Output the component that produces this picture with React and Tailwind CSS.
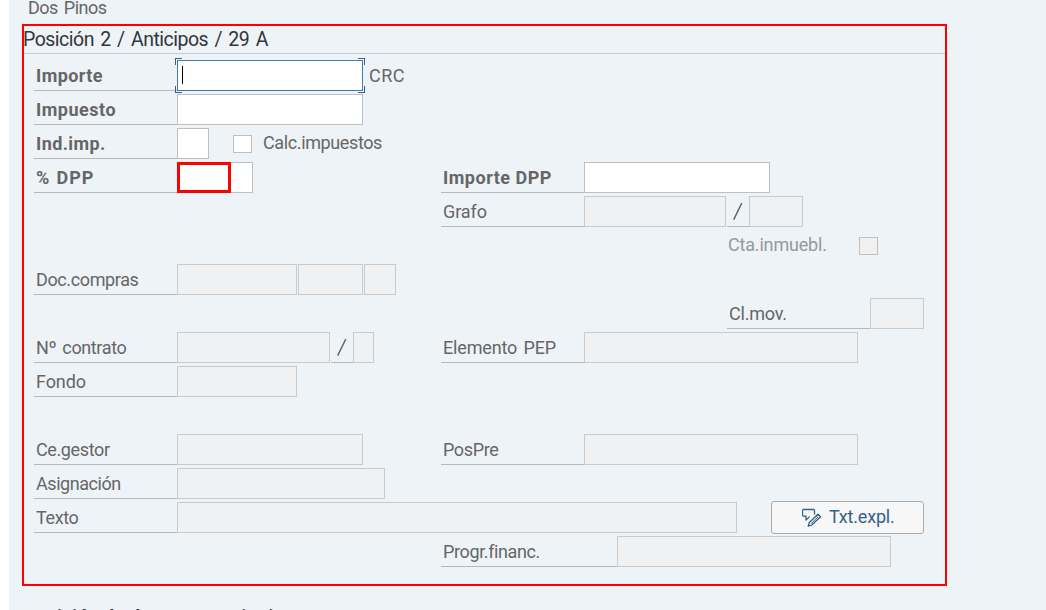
import React from "react";

const Row = ({ children }) => <div className="flex h-[34px] items-start">{children}</div>;

const Label = ({ children, className = "w-[143px]" }) => (
  <div className={`h-[31px] shrink-0 whitespace-nowrap border-b border-[#b5b9bb] pl-[2px] leading-[31px] ${className}`}>
    {children}
  </div>
);

const Slash = ({ className = "" }) => (
  <div className={`ml-px flex h-[31px] w-[22px] shrink-0 items-center justify-center border-b border-[#b5b9bb] ${className}`}>
    <svg width="10" height="18" viewBox="0 0 10 18" fill="none" stroke="#666" strokeWidth="1.5">
      <path d="M.7 17.6 8.8 1" />
    </svg>
  </div>
);

const Input = ({ className = "" }) => (
  <div className={`h-[31px] shrink-0 border border-[#bfbfbf] bg-white ${className}`} />
);

const ReadOnly = ({ className = "" }) => (
  <div className={`h-[31px] shrink-0 border border-[#c9cacb] bg-[#f0f1f3] ${className}`} />
);

const FocusedInput = () => (
  <div className="relative h-[31px] w-[186px] shrink-0 border border-[#427cac] bg-white pl-1 pt-[5px]">
    <div className="h-[18px] w-px bg-black" />
    <span className="absolute -left-[3px] -top-[3px] h-[7px] w-[7px] border-l border-t border-[#346187]" />
    <span className="absolute -right-[3px] -top-[3px] h-[7px] w-[7px] border-r border-t border-[#346187]" />
    <span className="absolute -bottom-[3px] -left-[3px] h-[7px] w-[7px] border-b border-l border-[#346187]" />
    <span className="absolute -bottom-[3px] -right-[3px] h-[7px] w-[7px] border-b border-r border-[#346187]" />
  </div>
);

export default function App() {
  return (
    <div className="h-[610px] w-[1046px] overflow-hidden bg-white pl-[9px] font-['Roboto',sans-serif] text-[18px] tracking-[-0.38px] text-[#666] [word-spacing:2px]">
      <div className="h-full bg-[#eef3f8] pl-[13px]">
        <div className="flex h-6 items-start pl-[6px]">
          <span className="-mt-[2px] whitespace-nowrap leading-[20px] tracking-[-0.5px]">Dos Pinos</span>
        </div>
        <main className="h-[562px] w-[925px] border-2 border-[#fe0000]">
          <h1 className="h-[28px] whitespace-nowrap border-b border-[#c5cdd2] text-[19.5px] leading-[27px] tracking-[-0.5px] text-[#32363a] [word-spacing:2px]">
            <span className="-ml-px">Posición 2 / Anticipos / 29 A</span>
          </h1>
          <div className="pl-[10px] pt-[6px]">
            <Row>
              <Label className="w-[143px] font-bold tracking-[0.4px]">Importe</Label>
              <FocusedInput />
              <span className="ml-[6px] leading-[31px] tracking-[0.5px]">CRC</span>
            </Row>
            <Row>
              <Label className="w-[143px] font-bold tracking-[0.5px]">Impuesto</Label>
              <Input className="w-[186px]" />
            </Row>
            <Row>
              <Label className="w-[143px] font-bold tracking-[0.4px]">Ind.imp.</Label>
              <Input className="w-[32px]" />
              <div className="ml-6 mt-[7px] h-[18px] w-[19px] border border-[#bfbfbf] bg-white" />
              <span className="ml-[11px] leading-[30px]">Calc.impuestos</span>
            </Row>
            <Row>
              <Label className="w-[143px] font-bold tracking-[0.9px] [word-spacing:1px]">% DPP</Label>
              <div className="flex h-[31px] w-[76px] border border-[#bfbfbf] bg-white">
                <div className="-ml-px -mt-px h-[31px] w-[54px] border-[3px] border-[#fe0000]" />
              </div>
              <Label className="ml-[188px] w-[143px] font-bold tracking-[0.5px] [word-spacing:0px]">Importe DPP</Label>
              <Input className="w-[186px]" />
            </Row>
            <Row>
              <Label className="ml-[407px] w-[143px] tracking-[-0.1px]">Grafo</Label>
              <ReadOnly className="w-[142px]" />
              <Slash />
              <ReadOnly className="w-[54px]" />
            </Row>
            <Row>
              <span className="ml-[694px] w-[131px] leading-[30px] tracking-[-0.18px] text-[#95999d]">Cta.inmuebl.</span>
              <div className="mt-[7px] h-[18px] w-[19px] border border-[#bfbfbf] bg-[#f1f1f2]" />
            </Row>
            <Row>
              <Label>Doc.compras</Label>
              <ReadOnly className="w-[120px]" />
              <ReadOnly className="ml-px w-[65px]" />
              <ReadOnly className="ml-px w-[32px]" />
            </Row>
            <Row>
              <Label className="ml-[693px] w-[143px] tracking-[-0.2px]">Cl.mov.</Label>
              <ReadOnly className="w-[54px]" />
            </Row>
            <Row>
              <Label>Nº contrato</Label>
              <ReadOnly className="w-[153px]" />
              <Slash />
              <ReadOnly className="w-[21px]" />
              <Label className="ml-[67px] w-[143px] tracking-[-0.15px]">Elemento PEP</Label>
              <ReadOnly className="w-[274px]" />
            </Row>
            <Row>
              <Label className="w-[143px] tracking-[-0.1px]">Fondo</Label>
              <ReadOnly className="w-[120px]" />
            </Row>
            <Row />
            <Row>
              <Label>Ce.gestor</Label>
              <ReadOnly className="w-[186px]" />
              <Label className="ml-[78px] w-[143px]">PosPre</Label>
              <ReadOnly className="w-[274px]" />
            </Row>
            <Row>
              <Label className="w-[143px] tracking-[-0.45px]">Asignación</Label>
              <ReadOnly className="w-[208px]" />
            </Row>
            <Row>
              <Label>Texto</Label>
              <ReadOnly className="w-[560px]" />
              <button className="-mt-px ml-[34px] flex h-[33px] w-[153px] items-center rounded-[3px] border border-[#ababab] bg-[#f7f7f7] pl-[30px] text-[#346187]">
                <svg width="20" height="20" viewBox="0 0 20 20" fill="none" stroke="currentColor" strokeWidth="1.3" strokeLinejoin="round">
                  <path d="M12.5 6.5V2.2L11.8 1.5H1.2L.5 2.2v5.2l.7.8H4v3.9L7.6 8.6" />
                  <path d="M6.2 18.2 7.3 14.5 16 6.2 18.5 8.8 9.8 17z" />
                  <path strokeWidth="0.9" d="M14.2 8.2l2.5 2.5M9 15.6l6.2-5.8" />
                </svg>
                <span className="-mt-[2px] ml-[7px] tracking-[-0.2px]">Txt.expl.</span>
              </button>
            </Row>
            <Row>
              <Label className="ml-[407px] w-[176px]">Progr.financ.</Label>
              <ReadOnly className="w-[274px]" />
            </Row>
          </div>
        </main>
        <h2 className="mt-[17px] whitespace-nowrap pl-[2px] text-[19px] font-bold leading-[27px] tracking-[0.1px] text-[#32363a] [word-spacing:0px]">
          Posición de documento siguiente
        </h2>
      </div>
    </div>
  );
}
